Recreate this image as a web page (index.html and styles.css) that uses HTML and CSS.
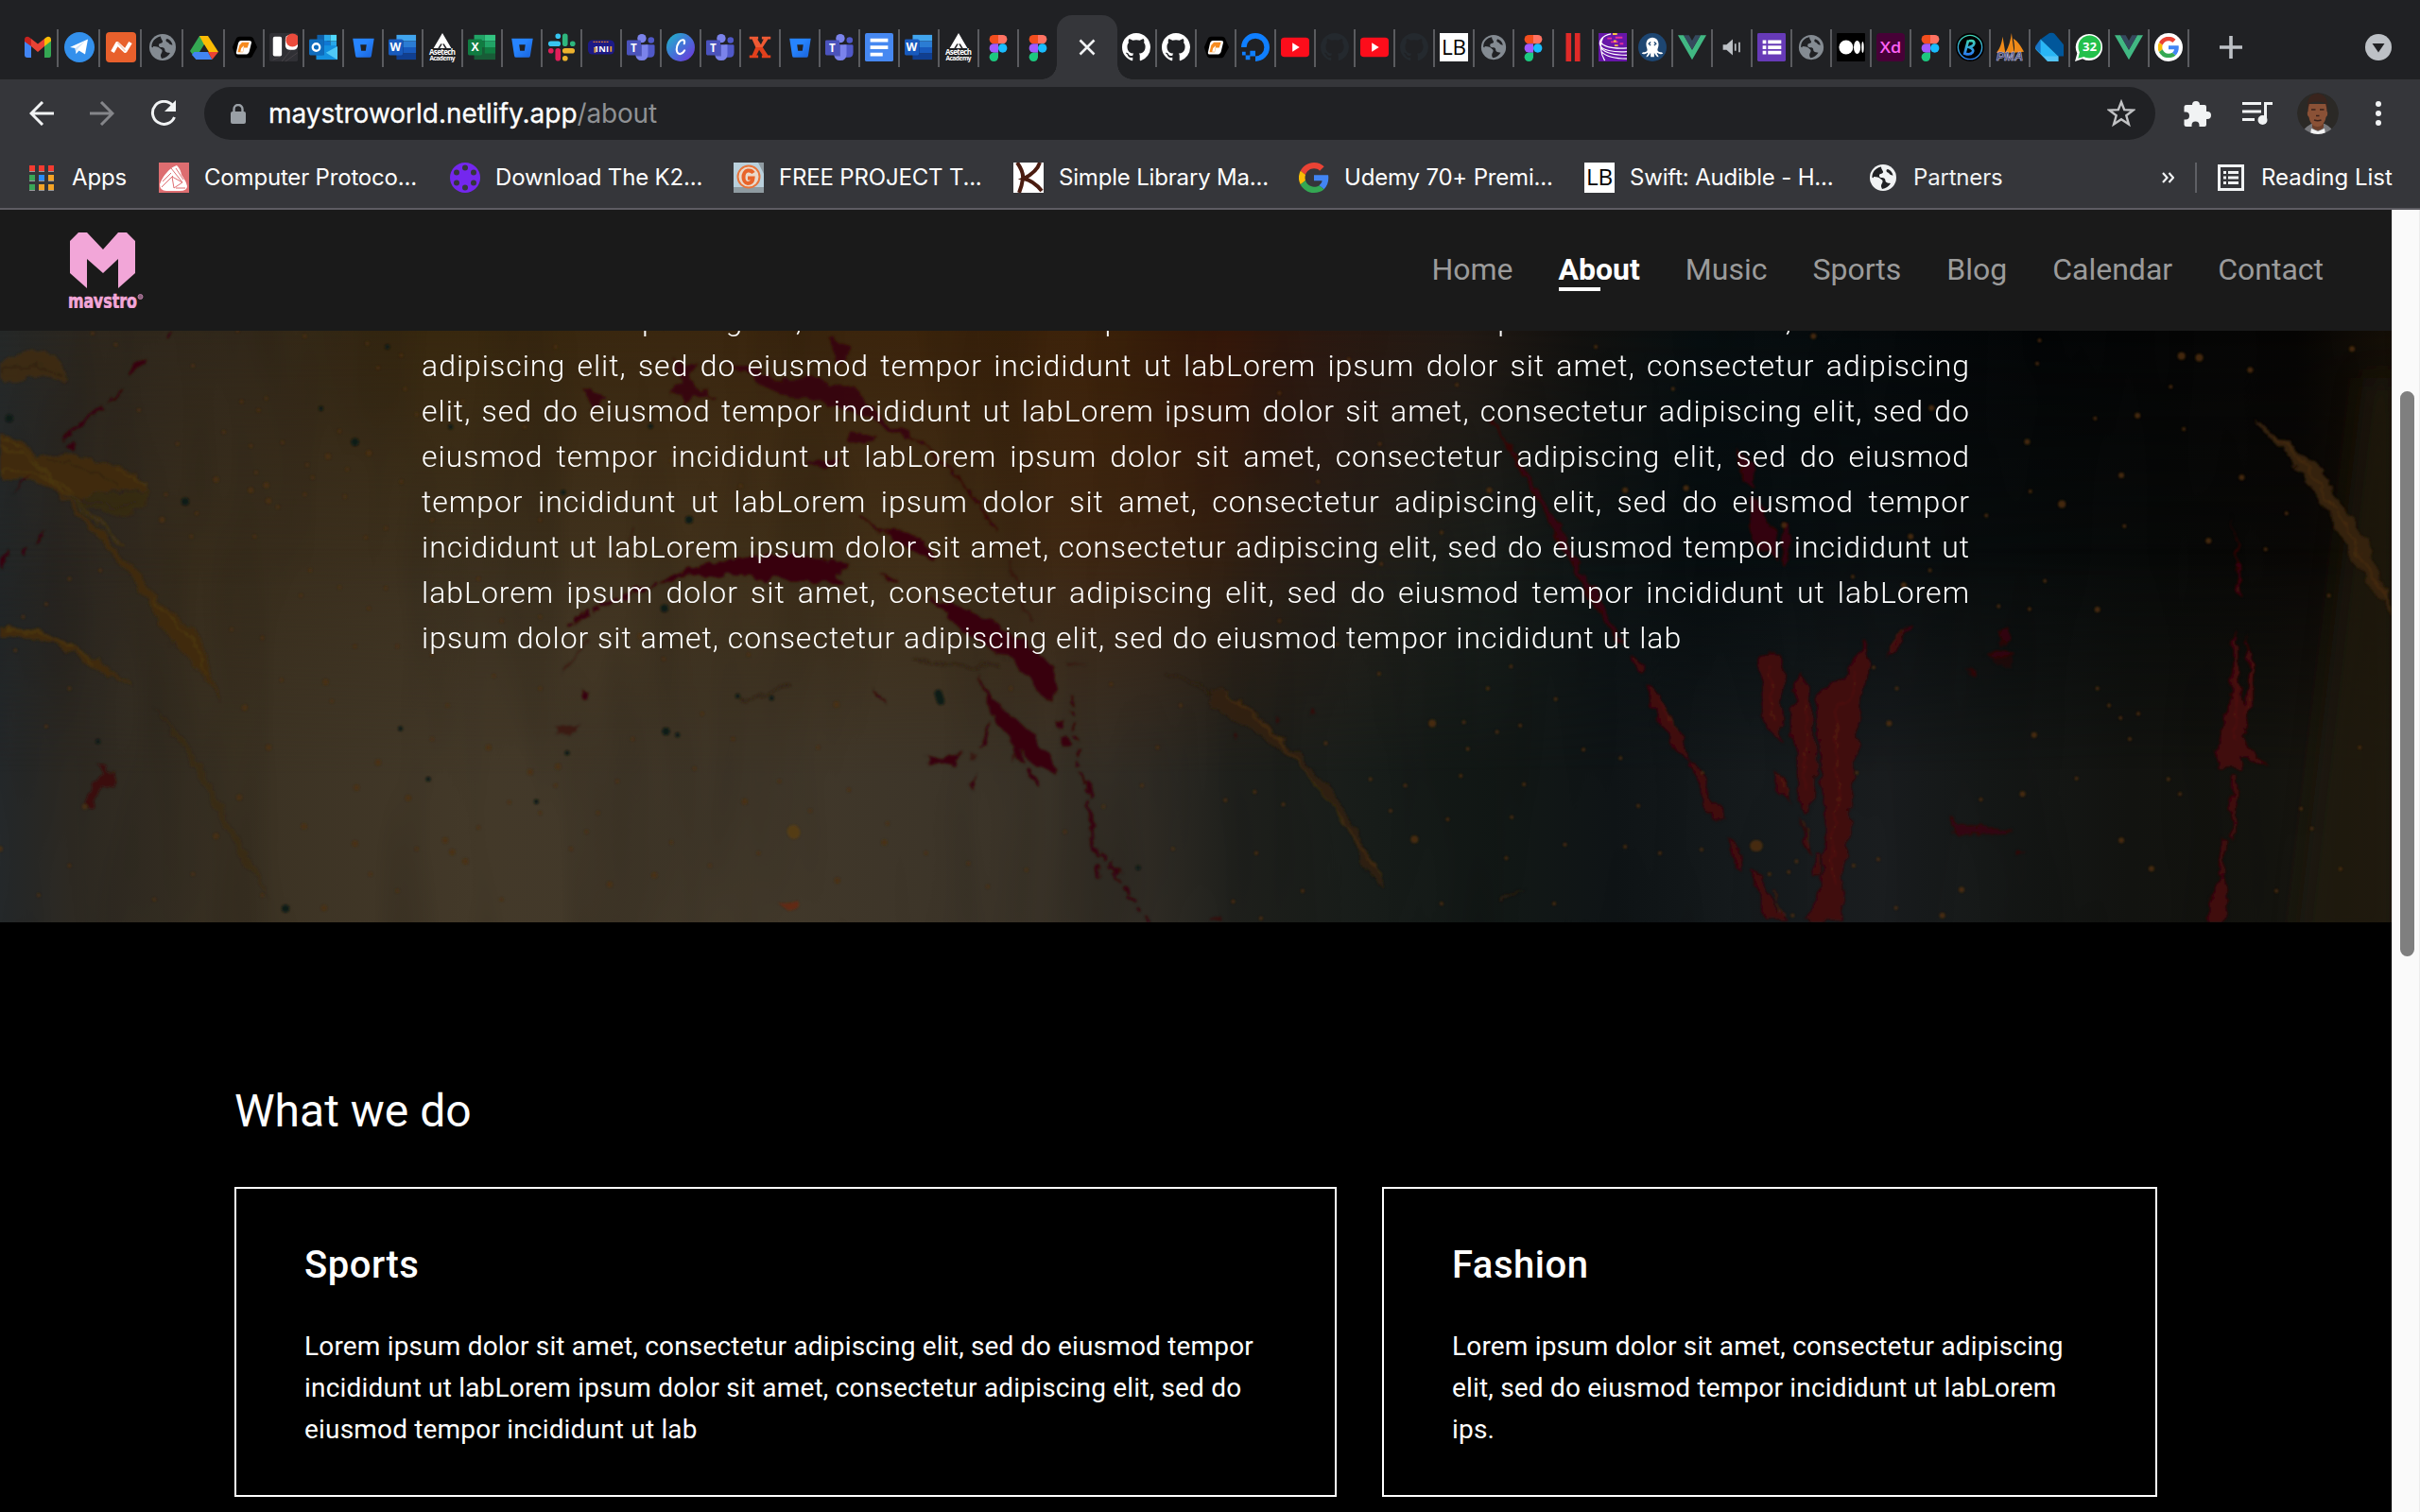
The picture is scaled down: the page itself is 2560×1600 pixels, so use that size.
FILE: index.html
```html
<!DOCTYPE html>
<html lang="en">
<head>
<meta charset="utf-8">
<title>About</title>
<link rel="stylesheet" href="styles.css">
</head>
<body>
<svg class="defs" aria-hidden="true">
  <defs>
    <linearGradient id="g-canva" x1="0" y1="0" x2="1" y2="1"><stop offset="0" stop-color="#1bb9c6"/><stop offset=".5" stop-color="#4472d8"/><stop offset="1" stop-color="#7430dc"/></linearGradient>
    <linearGradient id="g-b" x1="0" y1="0" x2="0" y2="1"><stop offset="0" stop-color="#41d4b4"/><stop offset="1" stop-color="#2b7ff0"/></linearGradient>
    <linearGradient id="g-bb" x1="0" y1="0" x2="1" y2="1"><stop offset=".4" stop-color="#2684ff"/><stop offset="1" stop-color="#1a62d8"/></linearGradient>
  </defs>
</svg>
<svg class="symbols" aria-hidden="true">
  <symbol id="gmail" viewBox="0 0 32 32"><path fill="#4285f4" d="M2 9v15q0 3 3 3h4V14z"/><path fill="#34a853" d="M23 27h5q2 0 2-3V9l-7 5z"/><path fill="#fbbc04" d="M23 7v8l7-5.500V8c0-3-3-4-5-2.500z"/><path fill="#ea4335" d="M9 15V7l7 5.500L23 7v8l-7 6z"/><path fill="#c5221f" d="M2 8v2l7 5V7L7 5.500C5 4 2 5 2 8z"/></symbol>
  <symbol id="telegram" viewBox="0 0 32 32"><circle cx="16" cy="16" r="16" fill="#3390ec"/><path fill="#fff" d="M6 16 25 7.500l-3 16-6.500-4-3 3.500-1-6z"/><path fill="#cfe3f8" d="m11.500 17 11-8-8.500 9-1.500 5z"/></symbol>
  <symbol id="netlify-n" viewBox="0 0 32 32"><rect width="32" height="32" rx="4" fill="#e8602c"/><path fill="none" stroke="#fff" stroke-width="4" stroke-linejoin="round" d="m7 21 5-9 8.500 8 5.500-9"/><path fill="none" stroke="#f5cdbb" stroke-width="1.500" d="m12.500 11 8 9"/></symbol>
  <symbol id="globe" viewBox="0 0 32 32"><circle cx="16" cy="16" r="14" fill="currentColor"/><path class="globe-cut" d="M14 4.500c-6 1-10 6-9.500 11.500 3 0 4 1 6.500 1.500 3 .5 5 .5 4.500 3-.5 2-1.500 2-1.500 5l1 2.500c4-.5 7-3 9-6-2-.5-3.500 0-5-1.500-1-1 0-3-2-4-2-.8-5 0-5-2.500 0-3 3-1.500 4-3.500.6-1.500-2-3-2-6z"/><path fill="currentColor" d="M6 15c4 0 7 1 8.500 3.500S12 23 12 26c-4-1-6.500-6-6-11z"/><path class="globe-cut" d="M21 7c-2 0-2 3 0 3.500 1.500.4 2 3 5.500 3-.8-3-2.500-5.500-5.500-6.500z"/></symbol>
  <symbol id="drive" viewBox="0 0 32 32"><path fill="#34a853" d="M11 4h5l3 5.500L7.500 29 1 20z"/><path fill="#fbbc04" d="M11 4h9l11 17H20z"/><path fill="#4285f4" d="M5.500 21H20l4.500 8H7.500L3 24z"/><path fill="#ea4335" d="M20 21h11l-6.500 8z"/><path fill="#202124" d="m16 13 5 8H11z"/></symbol>
  <symbol id="hex" viewBox="0 0 32 32"><path fill="#000" d="M11 4h12q3 0 4 3l4 9-5 9q-1 3-4 3H10q-3 0-4-3l-3-9 4-9q1-3 4-3z"/><path fill="#fff" d="M13 8.500h9q3 0 2.500 2.500L22 21q-1 3-4 3H9.500q-3 0-2-3l2-9q1-3.500 3.500-3.500z"/><path fill="#f68b1f" d="M14 10.500h8l-2 6h-4l-1 5H9l2-8z"/><path fill="#fff" d="m13 17 3-3-1 7h-3z"/></symbol>
  <symbol id="trello" viewBox="0 0 32 32"><rect width="32" height="32" rx="2" fill="#303035"/><path stroke="#484348" d="m14 32 16-20M18 32l14-10M4 30l8-3"/><rect x="4" y="4" width="10" height="22" rx="2" fill="#fff"/><rect x="18" y="2" width="14" height="17" rx="5" fill="#fff"/><circle cx="26" cy="8" r="7.500" fill="#ea4b3c"/></symbol>
  <symbol id="outlook" viewBox="0 0 32 32"><path fill="#0f5fa8" d="M9 2h11v13H9z"/><path fill="#28a8ea" d="M17 2h7v7h-7z"/><path fill="#50d9ff" d="M24 2h7v7h-7z"/><path fill="#0f78d4" d="M17 9h7v6h-7z"/><path fill="#28a8ea" d="M24 9h7v6h-7z"/><path fill="#1490df" d="M8 14h23v16H8z"/><path fill="#50c8f5" d="M32 15v15L19 22z"/><path fill="#1066b5" d="M8 8h9v17H8z"/><rect y="7" width="16" height="18" rx="1.500" fill="#0f6cbd"/><circle cx="8" cy="16" r="4" fill="none" stroke="#fff" stroke-width="2.500"/></symbol>
  <symbol id="bitbucket" viewBox="0 0 32 32"><path fill="url(#g-bb)" d="M4.500 6h24l-3 19.500q-.3 2-2 2H9.500q-1.700 0-2-2z"/><path fill="#202124" d="M13 13h7l-1 7h-5z"/></symbol>
  <symbol id="word" viewBox="0 0 32 32"><path fill="#41a5ee" d="M9 2h22v7H9z"/><path fill="#2b7cd3" d="M9 9h22v7H9z"/><path fill="#185abd" d="M9 16h22v7H9z"/><path fill="#103f91" d="M9 23h22v7H9z"/><path fill="#103f91" opacity=".6" d="M9 8h8v18H9z"/><rect y="7" width="16" height="18" rx="1.500" fill="#185abd"/><text x="8" y="20.500" class="fav-text" font-size="13">W</text></symbol>
  <symbol id="excel" viewBox="0 0 32 32"><path fill="#21a366" d="M7 2h12v7H7z"/><path fill="#33c481" d="M19 2h12v7H19z"/><path fill="#107c41" d="M7 9h12v7H7z"/><path fill="#21a366" d="M19 9h12v7H19z"/><path fill="#185c37" d="M7 16h24v14H7z"/><path fill="#107c41" d="M19 16h12v7H19z"/><rect y="7" width="16" height="18" rx="1.500" fill="#107c41"/><text x="8" y="20.500" class="fav-text" font-size="13">X</text></symbol>
  <symbol id="asetech" viewBox="0 0 32 32"><path fill="#fff" d="m16 0 10 17h-5l-5-8-5 8H6z"/><circle cx="16" cy="10" r="2.600" fill="#fff"/><path fill="#fff" d="m13 17 3-5 3 5z"/><text x="16" y="24.500" class="fav-text" font-size="8.500" textLength="30">Asetech</text><text x="16" y="31" class="fav-text" font-size="7" textLength="29">Academy</text></symbol>
  <symbol id="slack" viewBox="0 0 32 32"><g fill="none" stroke-width="6" stroke-linecap="round"><path stroke="#36c5f0" d="M4 12h8M12 3.500h.1"/><path stroke="#2eb67d" d="M20 3.500V12M28.500 12h.1"/><path stroke="#ecb22e" d="M20 20h8M20 28.500h.1"/><path stroke="#e01e5a" d="M12 20v8.500M4 20h.1"/></g></symbol>
  <symbol id="hundred" viewBox="0 0 32 32"><rect x="1" y="8" width="30" height="16" rx="5" fill="#1d1a86"/><path stroke="#d8792c" stroke-width="1.500" d="M7 10h18" stroke-dasharray="2 1"/><text x="16" y="21" class="fav-text" font-size="10">1NI</text><path stroke="#e2a13c" stroke-width="2" d="M9 16v6M27 15v6"/></symbol>
  <symbol id="teams" viewBox="0 0 32 32"><circle cx="17" cy="6" r="5" fill="#7b83eb"/><circle cx="27.500" cy="8" r="3.500" fill="#5059c9"/><path fill="#5059c9" d="M21 13h9q1.500 0 1.500 1.500V22q0 5-5 5.500H22z"/><path fill="#7b83eb" d="M10 13h14v11q0 7-7 7t-7-7z"/><path fill="#3b4099" opacity=".6" d="M10 13h7v13h-6z"/><rect y="8" width="16" height="17" rx="1.500" fill="#4b53bc"/><text x="8" y="21" class="fav-text" font-size="12.500">T</text></symbol>
  <symbol id="canva" viewBox="0 0 32 32"><circle cx="16" cy="16" r="16" fill="url(#g-canva)"/><path fill="none" stroke="#fff" stroke-width="2.200" stroke-linecap="round" d="M20 12c2-5-3-5.500-6-1.500-3.500 5-3.500 12 .5 13 2.500.5 4.500-1.500 6-4"/></symbol>
  <symbol id="redx" viewBox="0 0 32 32"><path fill="#ef5a34" d="M4 4h10v3h-1l4 6 3-6h-2V4h10v3h-3l-6 9h-8L7 7H4z"/><path fill="#e2401c" d="M11 16h8l6 9h3v3H18v-3h1l-4-6-3 6h2v3H4v-3h3z"/></symbol>
  <symbol id="docs" viewBox="0 0 32 32"><rect width="32" height="32" rx="2" fill="#4688f1"/><path fill="#fff" d="M6 6h20v4H6zM6 14h20v4H6zM6 22h14v4H6z"/></symbol>
  <symbol id="figma" viewBox="0 0 32 32"><path fill="#f24e1e" d="M16 2h-5a5 5 0 0 0 0 10h5z"/><path fill="#ff7262" d="M16 2h5a5 5 0 0 1 0 10h-5z"/><path fill="#a259ff" d="M16 12h-5a5 5 0 0 0 0 10h5z"/><circle cx="21" cy="17" r="5" fill="#1abcfe"/><path fill="#1cc87f" d="M16 22h-5a5 5 0 1 0 5 5z"/></symbol>
  <symbol id="github" viewBox="0 0 16 16"><path fill="currentColor" d="M8 0C3.580 0 0 3.580 0 8c0 3.540 2.290 6.530 5.470 7.590.4.070.55-.17.55-.38 0-.19-.01-.82-.01-1.490-2.010.37-2.530-.49-2.690-.94-.09-.23-.48-.94-.82-1.130-.28-.15-.68-.52-.01-.53.63-.01 1.080.58 1.230.82.72 1.210 1.870.87 2.330.66.07-.52.28-.87.51-1.070-1.780-.2-3.640-.89-3.640-3.950 0-.87.31-1.590.82-2.150-.08-.2-.36-1.020.08-2.120 0 0 .67-.21 2.200.82.64-.18 1.320-.27 2-.27s1.360.09 2 .27c1.530-1.040 2.200-.82 2.200-.82.44 1.100.16 1.920.08 2.120.51.56.82 1.270.82 2.150 0 3.070-1.870 3.750-3.650 3.950.29.25.54.73.54 1.480 0 1.070-.01 1.930-.01 2.200 0 .21.15.46.55.38A8.010 8.010 0 0 0 16 8c0-4.420-3.580-8-8-8z"/></symbol>
  <symbol id="docean" viewBox="0 0 32 32"><path fill="none" stroke="#0f7fff" stroke-width="6" d="M3 16a13 13 0 1 1 13 13"/><path fill="#0f7fff" d="M10 20h6v6h-6zM5 25h5v5H5zM1 21h4v4H1z"/></symbol>
  <symbol id="youtube" viewBox="0 0 32 32"><rect y="5" width="32" height="22" rx="4" fill="#fd0d1b"/><path fill="#fff" d="m13 11 8 5-8 5z"/></symbol>
  <symbol id="lb" viewBox="0 0 32 32"><path fill="#fff" d="M0 0h32v32H0z"/><text x="16" y="24" class="fav-dark" font-size="23" textLength="28" lengthAdjust="spacingAndGlyphs">LB</text></symbol>
  <symbol id="bars" viewBox="0 0 32 32"><path fill="#e02a28" d="M8 0h6v32H8zM18 0h6v32h-6z"/></symbol>
  <symbol id="waves" viewBox="0 0 32 32"><path fill="#6716a8" d="M0 0h32v32H0z"/><g fill="none" stroke="#fff" stroke-width="1.300"><path d="M14 1C4 3 0 9 2 14s14 8 30 7M3 17c5 6 16 8 29 8M3 21c6 6 17 8 29 8M5 5c-4 7-3 18 2 26M2 10c4 6 14 8 30 7"/></g><path stroke="#e5309c" stroke-width="2" d="M10 6h5M19 5h8M14 10h8M24 12h4"/><path stroke="#f6c445" stroke-width="2" d="M16 1h5M18 14h4M17 9h3"/></symbol>
  <symbol id="octopus" viewBox="0 0 32 32"><circle cx="16" cy="16" r="16" fill="#1d4672"/><path fill="#fff" d="M16 5c-5 0-7 4-7 8 0 3 2 5 1 7s-5 1-6 3c2 2 5 0 7-1 0 2-2 3-2 5 2 0 4-3 5-5v5h4v-5c1 2 3 5 5 5 0-2-2-3-2-5 2 1 5 3 7 1-1-2-5-1-6-3s1-4 1-7c0-4-2-8-7-8z"/><path fill="none" stroke="#1d4672" stroke-width="1.500" d="m14 10-2 2 2 2M18 10l2 2-2 2"/></symbol>
  <symbol id="vue" viewBox="0 0 32 32"><path fill="#41b883" d="M0 2.500h6.500L16 19l9.500-16.500H32L16 30z"/><path fill="#35495e" d="M6.500 2.500h6L16 8.500l3.500-6h6L16 19z"/></symbol>
  <symbol id="speaker" viewBox="0 0 32 32"><path fill="#bdc1c6" d="M6 13h4l7-6v18l-7-6H6z"/><path stroke="#bdc1c6" stroke-width="1.800" d="M20 12v8M24.500 10.500v11"/></symbol>
  <symbol id="forms" viewBox="0 0 32 32"><rect width="32" height="32" rx="1.500" fill="#673ab7"/><path fill="#fff" d="M6 8h4v4H6zM12 8h15v4H12zM6 14h4v4H6zM12 14h15v4H12zM6 20h4v4H6zM12 20h15v4H12z"/></symbol>
  <symbol id="medium" viewBox="0 0 32 32"><rect width="32" height="32" rx="1" fill="#000"/><circle cx="10.500" cy="16" r="8" fill="#fff"/><ellipse cx="23" cy="16" rx="3.800" ry="7.500" fill="#fff"/><ellipse cx="29.300" cy="16" rx="1.300" ry="6.500" fill="#fff"/></symbol>
  <symbol id="xd" viewBox="0 0 32 32"><rect width="32" height="32" rx="4" fill="#470137"/><text x="16" y="22" class="fav-text fav-pink" font-size="18" textLength="24" lengthAdjust="spacingAndGlyphs">Xd</text></symbol>
  <symbol id="b-logo" viewBox="0 0 32 32"><circle cx="16" cy="16" r="16" fill="#000"/><circle cx="16" cy="16" r="13.500" fill="none" stroke="url(#g-b)" stroke-width="1.500"/><path fill="none" stroke="url(#g-b)" stroke-width="3" d="m14 8-4 15c8 3 14-4 5-7 8-2 7-9 0-7"/></symbol>
  <symbol id="pma" viewBox="0 0 32 32"><path fill="#f08a18" d="M1 22C5 18 7 11 8 4l3 18zM11 22c4-6 6-14 7-22l3 22zM21 22c1-5 0-11-1-16 5 3 9 9 12 15z"/><text x="16" y="31" class="fav-pma" font-size="13" textLength="30" lengthAdjust="spacingAndGlyphs">PMA</text></symbol>
  <symbol id="dart" viewBox="0 0 32 32"><path fill="#01579b" d="M6 7 16 0q4-1 6 1l10 12v13h-6z"/><path fill="#29b6f6" d="m6 7 20 19v6H14L1 19q-2-2 0-5z"/><path fill="#0d47a1" opacity=".6" d="M6 7v16l-5-5q-2-2 0-5z"/><path fill="#54c5f8" d="m6 23 4 3h16v6H14z"/></symbol>
  <symbol id="whatsapp" viewBox="0 0 32 32"><path fill="#fff" d="M16 1a15 15 0 0 1 0 30q-4 0-7.500-2L0 32l2.500-9A15 15 0 0 1 16 1z"/><circle cx="16.500" cy="15.500" r="12.800" fill="#23c04b"/><path fill="#23c04b" d="m3.500 28.500 2-8 6 6z"/><text x="16.500" y="20.500" class="fav-text" font-size="14">32</text></symbol>
  <symbol id="google-g" viewBox="0 0 48 48"><path fill="#ea4335" d="M24 9.500c3.540 0 6.710 1.220 9.210 3.600l6.850-6.850C35.900 2.380 30.470 0 24 0 14.620 0 6.510 5.380 2.560 13.220l7.980 6.190C12.430 13.720 17.740 9.500 24 9.500z"/><path fill="#4285f4" d="M46.980 24.550c0-1.570-.15-3.090-.38-4.550H24v9.020h12.940c-.58 2.960-2.260 5.480-4.780 7.180l7.730 6c4.510-4.180 7.090-10.360 7.090-17.650z"/><path fill="#fbbc05" d="M10.530 28.590a14.500 14.500 0 0 1 0-9.180l-7.980-6.190a24 24 0 0 0 0 21.560z"/><path fill="#34a853" d="M24 48c6.480 0 11.930-2.130 15.890-5.810l-7.730-6c-2.150 1.450-4.920 2.300-8.160 2.300-6.260 0-11.570-4.220-13.470-9.910l-7.980 6.190C6.510 42.620 14.620 48 24 48z"/></symbol>
</svg>

<header class="browser">
  <div class="tabs">
    <span class="tab wide"><svg><use href="#gmail"/></svg></span>
    <span class="tab wide"><svg><use href="#telegram"/></svg></span>
    <span class="tab wide"><svg><use href="#netlify-n"/></svg></span>
    <span class="tab wide grey"><svg><use href="#globe"/></svg></span>
    <span class="tab wide"><svg><use href="#drive"/></svg></span>
    <span class="tab"><svg><use href="#hex"/></svg></span>
    <span class="tab"><svg><use href="#trello"/></svg></span>
    <span class="tab"><svg><use href="#outlook"/></svg></span>
    <span class="tab"><svg><use href="#bitbucket"/></svg></span>
    <span class="tab"><svg><use href="#word"/></svg></span>
    <span class="tab"><svg><use href="#asetech"/></svg></span>
    <span class="tab"><svg><use href="#excel"/></svg></span>
    <span class="tab"><svg><use href="#bitbucket"/></svg></span>
    <span class="tab"><svg><use href="#slack"/></svg></span>
    <span class="tab"><svg><use href="#hundred"/></svg></span>
    <span class="tab"><svg><use href="#teams"/></svg></span>
    <span class="tab"><svg><use href="#canva"/></svg></span>
    <span class="tab"><svg><use href="#teams"/></svg></span>
    <span class="tab"><svg><use href="#redx"/></svg></span>
    <span class="tab"><svg><use href="#bitbucket"/></svg></span>
    <span class="tab"><svg><use href="#teams"/></svg></span>
    <span class="tab"><svg><use href="#docs"/></svg></span>
    <span class="tab"><svg><use href="#word"/></svg></span>
    <span class="tab"><svg><use href="#asetech"/></svg></span>
    <span class="tab"><svg><use href="#figma"/></svg></span>
    <span class="tab last"><svg><use href="#figma"/></svg></span>
    <span class="tab-active"><svg viewBox="0 0 18 18"><path d="m1.500 1.500 15 15m0-15-15 15"/></svg></span>
    <span class="tab white"><svg><use href="#github"/></svg></span>
    <span class="tab white"><svg><use href="#github"/></svg></span>
    <span class="tab"><svg><use href="#hex"/></svg></span>
    <span class="tab"><svg><use href="#docean"/></svg></span>
    <span class="tab"><svg><use href="#youtube"/></svg></span>
    <span class="tab dim"><svg><use href="#github"/></svg></span>
    <span class="tab"><svg><use href="#youtube"/></svg></span>
    <span class="tab dim"><svg><use href="#github"/></svg></span>
    <span class="tab"><svg><use href="#lb"/></svg></span>
    <span class="tab grey"><svg><use href="#globe"/></svg></span>
    <span class="tab"><svg><use href="#figma"/></svg></span>
    <span class="tab"><svg><use href="#bars"/></svg></span>
    <span class="tab"><svg><use href="#waves"/></svg></span>
    <span class="tab"><svg><use href="#octopus"/></svg></span>
    <span class="tab"><svg><use href="#vue"/></svg></span>
    <span class="tab"><svg><use href="#speaker"/></svg></span>
    <span class="tab"><svg><use href="#forms"/></svg></span>
    <span class="tab grey"><svg><use href="#globe"/></svg></span>
    <span class="tab"><svg><use href="#medium"/></svg></span>
    <span class="tab"><svg><use href="#xd"/></svg></span>
    <span class="tab"><svg><use href="#figma"/></svg></span>
    <span class="tab"><svg><use href="#b-logo"/></svg></span>
    <span class="tab"><svg><use href="#pma"/></svg></span>
    <span class="tab"><svg><use href="#dart"/></svg></span>
    <span class="tab"><svg><use href="#whatsapp"/></svg></span>
    <span class="tab"><svg><use href="#vue"/></svg></span>
    <span class="tab"><svg viewBox="0 0 32 32"><circle cx="16" cy="16" r="16" fill="#fff"/><use href="#google-g" x="4" y="4" width="24" height="24"/></svg></span>
    <svg class="new-tab" viewBox="0 0 24 24"><path d="M12 0v24M0 12h24"/></svg>
    <svg class="tab-search" viewBox="0 0 28 28"><circle cx="14" cy="14" r="14"/><path d="M7.500 10h13L14 19.500z"/></svg>
  </div>

  <div class="toolbar">
    <div class="controls">
      <svg viewBox="0 0 26 26"><path d="M26 13H2M14 1 2 13l12 12"/></svg>
      <svg class="disabled" viewBox="0 0 26 26"><path d="M0 13h24M12 1l12 12-12 12"/></svg>
      <svg class="reload" viewBox="0 0 28 28"><path d="M23.500 5.500A12 12 0 1 0 25.500 18"/><path class="solid" d="M27 0v12H15z"/></svg>
    </div>
    <div class="omnibox">
      <svg class="lock" viewBox="0 0 16 21"><rect y="8" width="16" height="13" rx="2"/><path d="M3.500 9V5.500a4.500 4.500 0 0 1 9 0V9"/></svg>
      <span class="url">maystroworld.netlify.app<span>/about</span></span>
      <svg class="star" viewBox="0 0 30 30"><path d="m15 3 3.200 8.200 9.300.4-7.200 5.700 2.600 9.200L15 21.300l-7.900 5.200 2.600-9.200-7.200-5.700 9.300-.4z"/></svg>
    </div>
    <div class="actions">
      <svg class="puzzle" viewBox="0 0 29 28"><path d="M9 5a4 4 0 0 1 8 0h5q2 0 2 2v5h1a4 4 0 0 1 0 8h-1v6q0 2-2 2h-5.500v-1.500a4 4 0 0 0-8 0V28H3q-2.500 0-2.500-2v-5.500H2a4 4 0 0 0 0-8H.5V7Q.5 5 3 5z"/></svg>
      <svg class="queue" viewBox="0 0 32 24"><path d="M0 1.500h20M0 10h20M0 18.500h13"/><path d="M24.500 19V1.500H32"/><circle cx="21.500" cy="19" r="5"/></svg>
      <svg class="avatar" viewBox="0 0 44 44"><circle cx="22" cy="22" r="22" fill="#2b2926"/><path fill="#77787c" d="M5 44q1-6 10-11h14q9 4 9 11z"/><path fill="#f2f2f2" d="m15 38 7 3 7-3 1 6H14z"/><path fill="#6d3f2a" d="M16 28h12v9q-6 6-12 0z"/><path fill="#8a5136" d="M12 12h19l.5 8q1 0 .5 4l-1.500 2q-1 6-5 9-4 2-8 0-4-3-5-9l-1.500-2q-.5-4 .5-4z"/><path fill="#3a241d" d="M11.500 18Q9 2 21.500 1 34 2 31.500 18L30 11q-8-3-17 0z"/><path stroke="#38201a" stroke-width="1.500" fill="none" d="M15 18h4.500M24 18h4.500M18 29q4 1.500 7.500 0M20 24.500h3.500"/></svg>
      <svg class="kebab" viewBox="0 0 6 26"><circle cx="3" cy="3" r="3"/><circle cx="3" cy="13" r="3"/><circle cx="3" cy="23" r="3"/></svg>
    </div>
  </div>

  <div class="bookmarks">
    <a class="bm apps"><svg viewBox="0 0 26 27"><path fill="#98989c" d="M0 3h6v4H0zM10 3h6v4h-6zM20 3h6v4h-6zM0 13h6v4H0zM10 13h6v4h-6zM20 13h6v4h-6zM0 23h6v4H0zM10 23h6v4h-6zM20 23h6v4h-6z"/><path fill="#f43b30" d="M0 0h6v6H0zM10 0h6v6h-6zM20 0h6v6h-6z"/><path fill="#3aa757" d="M0 10h6v6H0zM0 20h6v6H0z"/><path fill="#2a8cf7" d="M10 10h6v6h-6z"/><path fill="#f5a425" d="M20 10h6v6h-6zM10 20h6v6h-6zM20 20h6v6h-6z"/></svg>Apps</a>
    <a class="bm"><svg viewBox="0 0 32 32"><path fill="#dd6d70" d="M0 0h32v32H0z"/><path fill="#fff" d="M19 3q4 4 5 10 5 7 6 12 0 5-8 5H8q-7 0-7-7 3-8 8-13 4-5 10-7z"/><path stroke="#dd6d70" fill="none" d="m4 20 9-9M3 26l12-12M14 15l11 6-9 6zM18 6l8 12M13 6l12 15M18 27h10"/></svg>Computer Protoco...</a>
    <a class="bm"><svg viewBox="0 0 32 32"><circle cx="16" cy="16" r="16" fill="#7427ee"/><g fill="#35363a"><circle cx="16" cy="5.500" r="3"/><circle cx="16" cy="26.500" r="3"/><circle cx="7" cy="10.500" r="3"/><circle cx="25" cy="10.500" r="3"/><circle cx="7" cy="21.500" r="3"/><circle cx="25" cy="21.500" r="3"/></g></svg>Download The K2...</a>
    <a class="bm"><svg viewBox="0 0 32 32"><path fill="#b9d0dc" d="M0 0h32v32H0z"/><path fill="#8f9ba1" d="M0 26h32v6H0zM26 0h6v12z"/><circle cx="16" cy="15" r="11.500" fill="#ead9cb" stroke="#e8743a" stroke-width="2"/><path fill="none" stroke="#e8642a" stroke-width="4" d="M21 11q-2-3-6-2.500c-6 1-6 13 0 13.500q5 0 5.500-5.500H15"/></svg>FREE PROJECT T...</a>
    <a class="bm"><svg viewBox="0 0 32 32"><path fill="#fff" d="M0 0h32v32H0z"/><path fill="none" stroke="#4a1c10" stroke-width="4" d="M4 0q7 10 6 17-1 8-4 15M28 0q-3 10-17 17 10 2 19 13"/></svg>Simple Library Ma...</a>
    <a class="bm"><svg><use href="#google-g"/></svg>Udemy 70+ Premi...</a>
    <a class="bm"><svg><use href="#lb"/></svg>Swift: Audible - H...</a>
    <a class="bm globe-bm"><svg viewBox="2 2 28 28"><use href="#globe" width="32" height="32"/></svg>Partners</a>
    <span class="more"><svg viewBox="0 0 13 12"><path d="m1 1 4.500 5L1 11M7.500 1l4.500 5-4.500 5"/></svg></span>
    <a class="reading"><svg viewBox="0 0 28 28"><path fill="none" stroke="#f1f3f4" stroke-width="3" d="M1.500 1.500h25v25h-25z"/><path fill="#f1f3f4" d="M6 7h3v3H6zM11 7h11v3H11zM6 12.500h3v3H6zM11 12.500h11v3H11zM6 18h3v3H6zM11 18h11v3H11z"/></svg>Reading List</a>
  </div>
</header>

<div class="viewport">
  <main class="page">
    <nav class="navbar">
      <svg class="logo" viewBox="0 0 80 80">
        <path fill="#f2a6d8" d="M2 9 11 0h9l17 18L53 0h9l9 9v34L53 59V28L37 43 20 28v31L2 43z"/>
        <text class="logo-word" x="0" y="80" textLength="73" lengthAdjust="spacingAndGlyphs">maystro</text>
        <circle cx="76.500" cy="68" r="2.500" fill="#8a5f7c" stroke="#b67ba3"/>
      </svg>
      <div class="links">
        <a>Home</a><a class="active">About</a><a>Music</a><a>Sports</a><a>Blog</a><a>Calendar</a><a>Contact</a>
      </div>
    </nav>

    <section class="hero">
      <svg class="painting" viewBox="0 350 2530 626" preserveAspectRatio="none">
        <defs>
          <linearGradient id="row-top"><stop offset="0" stop-color="#252828"/><stop offset=".04" stop-color="#2e271d"/><stop offset=".1" stop-color="#33291b"/><stop offset=".18" stop-color="#38280f"/><stop offset=".28" stop-color="#3a2710"/><stop offset=".4" stop-color="#3c240c"/><stop offset=".47" stop-color="#3d220a"/><stop offset=".51" stop-color="#36180a"/><stop offset=".55" stop-color="#2b1810"/><stop offset=".61" stop-color="#231a14"/><stop offset=".66" stop-color="#12110f"/><stop offset=".71" stop-color="#080f11"/><stop offset=".79" stop-color="#060a0c"/><stop offset=".85" stop-color="#040607"/><stop offset=".96" stop-color="#070605"/><stop offset="1" stop-color="#150f07"/></linearGradient>
          <linearGradient id="row-mid"><stop offset="0" stop-color="#25292a"/><stop offset=".025" stop-color="#2c2823"/><stop offset=".08" stop-color="#382d1c"/><stop offset=".2" stop-color="#3e3220"/><stop offset=".31" stop-color="#43331c"/><stop offset=".4" stop-color="#402e17"/><stop offset=".455" stop-color="#3e2713"/><stop offset=".505" stop-color="#352212"/><stop offset=".55" stop-color="#2a2119"/><stop offset=".61" stop-color="#1b1f1b"/><stop offset=".67" stop-color="#0d1415"/><stop offset=".71" stop-color="#070d0f"/><stop offset=".77" stop-color="#0a1012"/><stop offset=".9" stop-color="#080a09"/><stop offset=".965" stop-color="#0b0907"/><stop offset="1" stop-color="#171008"/></linearGradient>
          <linearGradient id="row-low"><stop offset="0" stop-color="#25292b"/><stop offset=".03" stop-color="#2d2922"/><stop offset=".1" stop-color="#3b3223"/><stop offset=".2" stop-color="#433929"/><stop offset=".32" stop-color="#41382a"/><stop offset=".435" stop-color="#3a3328"/><stop offset=".48" stop-color="#302c25"/><stop offset=".515" stop-color="#20211d"/><stop offset=".575" stop-color="#171c19"/><stop offset=".63" stop-color="#121816"/><stop offset=".675" stop-color="#0f1416"/><stop offset=".73" stop-color="#151a1c"/><stop offset=".79" stop-color="#1a1d1f"/><stop offset=".83" stop-color="#161918"/><stop offset=".89" stop-color="#121310"/><stop offset=".95" stop-color="#14140f"/><stop offset="1" stop-color="#1f1811"/></linearGradient>
          <linearGradient id="fade" x2="0" y2="1"><stop offset="0" stop-color="#000"/><stop offset="1" stop-color="#fff"/></linearGradient>
          <mask id="m-mid" maskUnits="userSpaceOnUse" x="0" y="350" width="2530" height="626"><rect y="350" width="2530" height="270" fill="url(#fade)"/><rect y="620" width="2530" height="356" fill="#fff"/></mask>
          <mask id="m-low" maskUnits="userSpaceOnUse" x="0" y="350" width="2530" height="626"><rect y="580" width="2530" height="240" fill="url(#fade)"/><rect y="820" width="2530" height="156" fill="#fff"/></mask>
          <filter id="soft" x="-60%" y="-40%" width="220%" height="180%"><feGaussianBlur stdDeviation="14"/></filter>
          <filter id="edge" filterUnits="userSpaceOnUse" x="0" y="350" width="2530" height="626"><feTurbulence type="fractalNoise" baseFrequency=".06" numOctaves="3" seed="2"/><feDisplacementMap in="SourceGraphic" scale="14" xChannelSelector="R" yChannelSelector="G"/><feGaussianBlur stdDeviation=".8"/></filter>
          <filter id="dot-soft" filterUnits="userSpaceOnUse" x="0" y="350" width="2530" height="626"><feGaussianBlur stdDeviation=".8"/></filter>
          <filter id="shade" x="0" y="0" width="100%" height="100%"><feTurbulence type="fractalNoise" baseFrequency=".01 .002" numOctaves="3" seed="9"/><feColorMatrix values="0 0 0 0 0  0 0 0 0 0  0 0 0 0 0  2 0 0 0 -.85"/></filter>
        </defs>
        <rect y="350" width="2530" height="626" fill="url(#row-top)"/>
        <rect y="350" width="2530" height="626" fill="url(#row-mid)" mask="url(#m-mid)"/>
        <rect y="350" width="2530" height="626" fill="url(#row-low)" mask="url(#m-low)"/>
        <rect y="350" width="2530" height="626" filter="url(#shade)" opacity=".16"/>
        <path filter="url(#soft)" fill="#241a10" opacity=".6" d="M2500 400h40v600h-110z"/>

        <!-- paint strokes on the left half of the canvas -->
        <g filter="url(#edge)"><g transform="translate(0 300) scale(.8163 .4464)">
          <g fill="#412c0f">
            <path opacity=".8" d="M0 190Q40 140 68 170 88 200 85 242 62 212 40 218 25 245 0 225z"/>
            <path d="M0 355Q30 375 50 408 100 398 150 435 185 455 194 492 150 480 120 500 105 520 80 500 50 458 0 468z"/>
            <path opacity=".4" d="M80 500 194 492Q190 540 160 552 110 530 80 500z"/>
            <path d="M75 490Q150 610 200 740 245 800 268 880L284 990Q262 910 240 880 205 830 195 760 150 640 75 500z"/>
            <path d="M0 812Q60 815 112 880 150 920 174 962 130 920 90 872 50 835 0 835z"/>
            <path opacity=".35" d="M196 1000Q260 1110 290 1250 320 1350 350 1460 310 1360 282 1260 255 1130 196 1000z"/>
          </g>
          <g fill="none" stroke="#513c0f" stroke-width="2" opacity=".6">
            <path vector-effect="non-scaling-stroke" d="M0 365Q45 400 75 480M0 450Q60 430 80 490L150 600M0 385Q60 420 160 620M150 440L192 480M200 750Q250 830 270 930M10 818Q80 830 120 900"/>
            <path vector-effect="non-scaling-stroke" stroke="#2f210f" d="M60 420Q120 430 150 480M5 210Q40 170 80 220M90 500Q140 540 180 520"/>
          </g>
          <g fill="#37040a">
            <path d="M213 128 224 110 218 128zM164 215Q172 180 194 178 191 200 164 215zM138 278 152 250 160 248 145 272zM80 375 128 290 132 296 88 370zM84 392 97 375 92 398zM14 505 44 448 30 480zM40 615 62 585 50 608zM27 632 36 625 30 645zM0 660 14 632 6 672 0 680z"/>
            <path d="M124 1140Q145 1145 150 1192 138 1190 128 1205 120 1250 112 1235 108 1200 128 1178 142 1165 124 1140z" fill="#3a100e"/>
            <path d="M1075 130 1102 148 1096 190 1080 178zM940 188Q985 200 1000 225L1060 222Q1070 250 1085 235 1112 255 1130 290 1150 340 1190 375 1155 360 1135 325 1090 295 1060 282 1010 270 990 238 965 215 940 188zM872 182 902 192 892 225 925 272 900 262 885 288 885 260 866 266 884 235zM757 245 788 275 768 295zM1100 353 1138 360 1120 384 1095 374zM1045 420 1090 415 1075 440z" opacity=".85"/>
            <path d="M1145 585 1192 600Q1205 630 1212 652 1180 635 1165 615zM860 700Q920 655 970 643 1040 638 1100 665L1085 688 1097 714Q1060 712 1030 700 980 707 960 690 920 687 860 700zM1138 690 1168 710 1150 706zM1202 740Q1250 765 1280 800 1330 850 1350 880 1374 920 1366 990 1340 975 1328 920 1290 870 1265 840 1235 820 1230 780z"/>
            <path d="M1268 918Q1278 980 1300 1010 1345 1070 1373 1168 1320 1122 1300 1060 1275 1000 1268 918zM1369 1035h8v20h-8zM1375 1068h10v22h-10zM1202 1118 1215 1128 1245 1114 1238 1142 1220 1135 1205 1150zM1284 1030 1278 1090 1270 1100zM1268 1158 1260 1200 1254 1205zM1133 952 1146 1000 1138 985zM754 962 766 975 758 982z"/>
            <path opacity=".5" d="M715 1060 752 1042 750 1062 720 1075zM1378 900 1412 902 1380 906zM1255 1110 1268 1120 1256 1135zM1312 1115 1322 1110 1316 1142z"/>
          </g>
          <g fill="none" stroke="#37040a" stroke-width="2" stroke-linecap="round">
            <path vector-effect="non-scaling-stroke" d="M1190 375Q1250 460 1290 585M1115 550L1150 600"/>
            <path vector-effect="non-scaling-stroke" stroke-width="4" stroke-dasharray="14 6 5 8" d="M875 697Q800 745 735 805"/>
            <path vector-effect="non-scaling-stroke" stroke-width="3" stroke-dasharray="7 9 2 10" d="M1388 980Q1402 1180 1420 1330 1450 1420 1486 1510"/>
            <path vector-effect="non-scaling-stroke" stroke-width="4" stroke-dasharray="16 14" d="M1410 1180Q1415 1300 1425 1400M1440 1370 1464 1440M1315 1100 1345 1190"/>
            <path vector-effect="non-scaling-stroke" opacity=".5" d="M820 580 818 620M1310 660 1335 800M760 850 730 920"/>
          </g>
          <g fill="none" stroke="#30200f" stroke-width="3" opacity=".6"><path vector-effect="non-scaling-stroke" d="M1185 890Q1230 915 1290 905M960 990 1025 955M1510 925Q1550 940 1568 975"/></g>
        </g></g>
        <g filter="url(#dot-soft)"><g transform="translate(0 300) scale(.8163 .4464)">
          <g class="dots" stroke="#0b1a13" stroke-width="8">
            <path vector-effect="non-scaling-stroke" d="M460 376h0M240 517h0M12 320h0M893 560h0M861 770h0M863 1062h0M1216 972l3 18M370 1482h0"/>
            <path vector-effect="non-scaling-stroke" stroke-width="5" d="M735 1113h0M127 1086h0M695 1228h0M843 338h0M956 978h0M1475 1385h0M584 340h0M730 495h0M502 150h0M416 296h0M555 1175h0M519 1055h0M1000 983h0M878 1070h0"/>
          </g>
          <g class="dots" stroke="#4d300d" stroke-width="4" opacity=".8">
            <path vector-effect="non-scaling-stroke" d="M120 118h0M308 112h0M395 125h0M476 142h0M150 145h0M520 170h0M313 280h0M345 272h0M290 352h0M335 300h0M180 300h0M250 195h0M525 250h0M540 310h0M490 200h0M366 377h0M325 385h0M440 350h0M398 430h0M450 440h0M230 380h0M332 448h0M215 500h0M405 460h0M360 530h0M255 545h0M520 470h0M395 500h0M447 505h0M500 580h0M474 602h0M560 560h0M248 600h0M330 600h0M600 520h0M620 700h0M440 720h0M500 722h0M478 770h0M390 740h0M560 760h0M650 800h0M700 790h0M402 680h0M340 840h0M460 860h0M300 820h0M515 860h0M560 880h0M610 830h0M90 700h0M60 760h0M130 680h0M30 790h0M20 870h0M90 960h0M60 1050h0"/>
            <path vector-effect="non-scaling-stroke" stroke-width="6" d="M425 410h0M478 402h0M280 465h0M345 478h0M348 515h0M210 560h0M325 490h0M422 945h0M317 1005h0M348 1100h0M462 1195h0M310 1218h0M490 1135h0M529 1220h0M394 1287h0M460 1328h0M577 1320h0M586 1348h0M603 1370h0M633 1100h0M687 1158h0M723 1145h0M848 1403h0M965 1228h0M1085 1415h0M1146 1325h0M1084 998h0M790 1425h0M420 1480h0M110 1240h0M0 1340h0M280 1310h0M830 836h0"/>
            <path vector-effect="non-scaling-stroke" d="M700 1255h0M760 1300h0M870 1325h0M920 1380h0M740 1340h0M1010 1180h0M1050 1250h0M1100 1200h0M1150 1280h0M1060 1100h0M900 1150h0M950 1080h0M660 1230h0M620 1290h0M540 1340h0M480 1400h0M340 1450h0M250 1400h0M200 1460h0M90 1380h0M50 1450h0M1280 1430h0M1330 1390h0M1380 1300h0M1430 1240h0M1480 1190h0M1520 1340h0M1500 1100h0M1530 1000h0M1440 950h0M1310 960h0M860 890h0M970 880h0M1060 850h0M700 560h0M640 610h0M680 340h0M600 280h0M660 200h0M720 150h0M800 300h0M870 420h0M960 480h0M1020 540h0M983 1350h0M1200 1350h0M1255 1375h0M800 1180h0M775 1255h0M720 1190h0M515 1440h0M650 1460h0M430 990h0M365 940h0M560 1080h0M580 1000h0M820 1080h0M910 1020h0M700 960h0M640 930h0"/>
            <path vector-effect="non-scaling-stroke" stroke="#5c3e10" stroke-width="13" d="M1028 1298l1 4"/>
            <path stroke="none" fill="#6a260a" d="M1008 1468Q1020 1472 1034 1464 1040 1482 1022 1487z"/>
          </g>
        </g></g>

        <!-- paint strokes on the right half of the canvas -->
        <g filter="url(#edge)"><g transform="translate(1280 300) scale(.8163 .4464)">
          <g fill="#35210b">
            <path d="M1352 325Q1430 400 1470 530 1512 640 1531 800 1500 700 1468 610 1430 460 1352 325z"/>
            <path d="M0 955Q50 985 90 1080 170 1180 226 1435 198 1410 190 1330 150 1190 90 1100 40 1040 0 1005z" opacity=".8"/>
            <path d="M405 1425 382 1468 378 1460z" opacity=".7"/>
          </g>
          <path vector-effect="non-scaling-stroke" fill="none" stroke="#5a3b0d" stroke-width="2" opacity=".5" d="M1380 360Q1450 470 1530 780M20 970Q100 1070 220 1400"/>
          <g fill="#3f0709">
            <path d="M365 310Q385 380 412 450 450 560 482 680 505 760 540 858L530 850Q495 770 470 670 440 560 405 450 382 380 362 318z" opacity=".8"/>
            <path d="M542 885Q560 890 565 932 550 925 542 885zM562 948Q580 950 586 1000 600 1050 612 1070L622 1132Q605 1120 590 1060 570 1000 562 948zM620 1132Q635 1135 645 1190 660 1250 668 1272L650 1270Q635 1200 620 1132zM670 1315 680 1325 692 1398 682 1385zM703 1392Q715 1400 722 1445L746 1513H718Q712 1440 703 1392z"/>
            <path opacity=".8" d="M684 390 698 420 704 478 695 470zM702 500Q715 505 722 570L732 590 734 655Q705 630 700 570zM742 570h9v20l-4 80h-5z"/>
            <path d="M848 848 854 920Q838 1000 840 1080 832 1250 826 1350 814 1420 824 1440L816 1513H770L790 1440Q800 1350 795 1250 785 1100 790 980 800 930 822 938z"/>
            <path d="M765 915Q780 980 784 1080 790 1200 772 1262 758 1200 764 1120 745 1050 755 990zM712 885Q747 868 748 930 735 1000 742 1092 708 1030 714 980zM730 1155Q740 1160 752 1232 735 1220 730 1155zM766 1265 779 1355 770 1340zM784 1350h8v50h-8zM907 808 900 850 876 885 885 850z"/>
            <path opacity=".75" d="M1020 825 1032 815 1036 850 1024 860zM1005 885 1020 870 1042 875 1030 890zM980 920 992 922 990 935zM958 1262 985 1288 1040 1295 1030 1306 990 1304 965 1312zM1045 1345 1055 1350 1048 1355zM82 1018 92 1040 88 1042zM132 1005 135 1025 128 1030zM30 1070 35 1082 30 1080z"/>
            <path opacity=".35" d="M1010 890 1036 885 1040 915z"/>
            <path d="M1326 550 1338 740 1333 735zM1330 820Q1320 900 1325 980L1310 1060 1303 1150 1337 1150 1335 1120 1372 1142Q1352 1100 1337 1090L1352 980 1352 900 1343 825 1346 920 1338 1000 1332 940zM1326 1170h6l-4 145h-6zM1310 1310 1318 1320 1314 1410 1308 1400zM1312 1402Q1328 1440 1314 1513H1298L1290 1470z"/>
            <path d="M0 1505 15 1500 20 1513H0z" opacity=".6"/>
          </g>
          <g fill="none" stroke="#5a1c0c" stroke-width="2" opacity=".7">
            <path vector-effect="non-scaling-stroke" d="M835 920Q838 980 810 1000 812 1150 815 1240 800 1330 812 1420M770 980 775 1200M725 900 732 1030M1330 900V1080M1350 900 1342 1030M580 990 606 1060M900 815 880 870M772 1280 777 1340M735 1165 747 1215M730 1440 742 1500"/>
          </g>
        </g></g>
        <g filter="url(#dot-soft)"><g transform="translate(1280 300) scale(.8163 .4464)">
          <g class="dots" stroke="#4f2f0b" stroke-width="5" opacity=".85">
            <path vector-effect="non-scaling-stroke" stroke-width="8" d="M1259 172h0M1282 176h0M1104 523h0M288 1043h0M265 1318h0"/>
            <path vector-effect="non-scaling-stroke" stroke-width="12" d="M707 1333h2"/>
            <path vector-effect="non-scaling-stroke" stroke-width="6" d="M782 125h0M1480 155h0M1348 205h0M1337 460h0M1181 455h0M1294 610h0M935 295h0M1059 375h0M1202 313h0M908 600h0M538 490h0M362 490h0M617 485h0M744 573h0M899 715h0M1150 773h0M880 1043h0M1068 1070h0M1220 1387h0M974 1437h0M949 1498h0M1181 1320h0M1053 1210h0"/>
            <path vector-effect="non-scaling-stroke" stroke-width="4" d="M1075 135h0M1072 190h0M1147 320h0M1262 345h0M1245 245h0M1185 575h0M1368 630h0M1395 545h0M1063 493h0M1006 550h0M1082 705h0M933 680h0M1062 772h0M1022 765h0M833 695h0M870 645h0M1123 1173h0M1242 1175h0M1257 1210h0M1192 1080h0M1414 1245h0M1465 1388h0M1428 1292h0M1382 1440h0M866 1365h0M834 1380h0M760 1370h0M750 1395h0M889 1480h0M755 1498h0M460 1330h0M532 1125h0M484 1105h0M448 985h0M402 1048h0M372 1063h0M360 960h0M253 1190h0M208 1175h0M234 1250h0M308 1270h0M95 1235h0M20 1225h0M60 1350h0M120 1440h0M66 1505h0M300 1470h0M165 855h0M90 800h0M300 590h0M140 470h0M220 380h0M320 240h0M90 260h0M180 180h0M500 150h0M600 250h0M1150 960h0M1165 1000h0M1180 1030h0M1203 1020h0M860 910h0M838 1160h0M890 960h0M1450 740h0M1490 1100h0M999 1223h0M555 1238h0M538 1335h0M583 1350h0M638 1160h0M637 1342h0M725 1400h0M391 1265h0M325 1167h0M334 1103h0M407 1187h0M384 1362h0M446 1470h0M58 1205h0M30 1465h0M150 1090h0M329 1040h0M390 908h0M222 665h0M219 925h0"/>
          </g>
        </g></g>
      </svg>
      <p class="story">consectetur adipiscing elit, sed do eiusmod tempor incididunt ut labLorem ipsum dolor sit amet, consectetur adipiscing elit, sed do eiusmod tempor incididunt ut labLorem ipsum dolor sit amet, consectetur adipiscing elit, sed do eiusmod tempor incididunt ut labLorem ipsum dolor sit amet, consectetur adipiscing elit, sed do eiusmod tempor incididunt ut labLorem ipsum dolor sit amet, consectetur adipiscing elit, sed do eiusmod tempor incididunt ut labLorem ipsum dolor sit amet, consectetur adipiscing elit, sed do eiusmod tempor incididunt ut labLorem ipsum dolor sit amet, consectetur adipiscing elit, sed do eiusmod tempor incididunt ut labLorem ipsum dolor sit amet, consectetur adipiscing elit, sed do eiusmod tempor incididunt ut labLorem ipsum dolor sit amet, consectetur adipiscing elit, sed do eiusmod tempor incididunt ut lab</p>
    </section>

    <section class="services">
      <h2>What we do</h2>
      <div class="cards">
        <article class="card">
          <h3>Sports</h3>
          <p>Lorem ipsum dolor sit amet, consectetur adipiscing elit, sed do eiusmod tempor incididunt ut labLorem ipsum dolor sit amet, consectetur adipiscing elit, sed do eiusmod tempor incididunt ut lab</p>
        </article>
        <article class="card">
          <h3>Fashion</h3>
          <p>Lorem ipsum dolor sit amet, consectetur adipiscing elit, sed do eiusmod tempor incididunt ut labLorem ips.</p>
        </article>
      </div>
    </section>
  </main>
  <div class="scrollbar"><div class="thumb"></div></div>
</div>
</body>
</html>
```
FILE: styles.css
```css
* { box-sizing: border-box; }
body {
  margin: 0;
  width: 2560px;
  height: 1600px;
  overflow: hidden;
  background: #000;
  color: #fff;
  font-family: Roboto, sans-serif;
}
svg { display: block; flex: none; }
.defs { position: absolute; width: 0; height: 0; }
.symbols { display: none; }
h2, h3, p { margin: 0; }

/* browser chrome */
.browser {
  height: 222px;
  background: #35363a;
  border-bottom: 2px solid #5d5c62;
  font-family: Inter, sans-serif;
}
.tabs {
  display: flex;
  align-items: flex-start;
  height: 84px;
  padding-left: 18px;
  background: #202124;
}
.tab {
  flex: none;
  display: flex;
  align-items: center;
  justify-content: center;
  width: 42px;
  height: 40px;
  margin-top: 31px;
  padding-bottom: 2px;
  border-right: 2px solid #5a5b5f;
}
.tab.wide { width: 44px; padding-left: 1px; }
.tab.last { width: 40px; border-right: 0; }
.tab svg { width: 30px; height: 32px; }
.tab.wide svg { width: 32px; }
.grey { color: #848b92; }
.white { color: #fff; }
.dim { color: #24292e; }
.globe-cut { fill: #202124; }
.fav-text {
  fill: #fff;
  font-family: "Open Sans", sans-serif;
  font-weight: 700;
  text-anchor: middle;
}
.fav-pink { fill: #ff61f6; font-weight: 600; }
.fav-dark { fill: #000; font-family: "Open Sans", sans-serif; font-weight: 500; text-anchor: middle; }
.fav-pma {
  fill: #2d2f66;
  stroke: #c9cbe6;
  stroke-width: .6;
  font-family: "Liberation Sans", sans-serif;
  font-weight: 700;
  font-style: italic;
  text-anchor: middle;
}
.tab-active {
  position: relative;
  flex: none;
  display: flex;
  align-items: center;
  justify-content: center;
  width: 64px;
  height: 68px;
  margin-top: 16px;
  border-radius: 16px 16px 0 0;
  background: #35363a;
}
.tab-active::before, .tab-active::after {
  content: "";
  position: absolute;
  bottom: 0;
  width: 16px;
  height: 16px;
}
.tab-active::before { left: -16px; background: radial-gradient(circle at 0 0, transparent 15.5px, #35363a 16px); }
.tab-active::after { right: -16px; background: radial-gradient(circle at 100% 0, transparent 15.5px, #35363a 16px); }
.tab-active svg { width: 18px; height: 18px; stroke: #f1f3f4; stroke-width: 2.6; }
.new-tab { width: 24px; height: 24px; margin: 38px 0 0 32px; stroke: #bdc1c6; stroke-width: 3.6; }
.tab-search { width: 28px; height: 28px; margin: 36px 30px 0 auto; fill: #bdc1c6; }
.tab-search path { fill: #202124; }

.toolbar {
  display: flex;
  align-items: center;
  height: 72px;
  padding-left: 31px;
}
.controls { display: flex; gap: 38px; width: 185px; fill: none; stroke: #f1f3f4; stroke-width: 3; }
.controls svg { width: 26px; height: 26px; }
.controls .disabled { stroke: #85868a; }
.controls .reload { width: 28px; height: 28px; margin-top: -1px; }
.controls .solid { fill: #f1f3f4; stroke: none; }
.omnibox {
  display: flex;
  align-items: center;
  width: 2064px;
  height: 56px;
  padding: 0 21px 0 28px;
  border-radius: 28px;
  background: #202124;
}
.lock { width: 16px; height: 21px; margin-right: 24px; fill: #9aa0a6; }
.lock path { fill: none; stroke: #9aa0a6; stroke-width: 2.4; }
.url { flex: 1; font-size: 28px; line-height: 34px; -webkit-text-stroke: .3px; }
.url span { color: #8f9194; letter-spacing: -.2px; -webkit-text-stroke: 0; }
.star { width: 30px; height: 30px; fill: none; stroke: #c2c3c5; stroke-width: 2.4; }
.actions { display: flex; align-items: center; padding-left: 30px; fill: #f1f3f4; }
.puzzle { width: 29px; height: 28px; }
.queue { width: 32px; height: 24px; margin-left: 33px; }
.queue path { fill: none; stroke: #f1f3f4; stroke-width: 3; }
.avatar { width: 44px; height: 44px; margin-left: 26px; border-radius: 50%; }
.kebab { width: 6px; height: 26px; margin-left: 39px; }

.bookmarks {
  display: grid;
  grid-template-columns: 137px 308px 300px 296px 302px 302px 302px 309px 35px 236px;
  align-items: center;
  height: 64px;
  padding-left: 31px;
  font-size: 24px;
  line-height: 32px;
  letter-spacing: -.18px;
}
.bm, .reading { display: flex; align-items: center; gap: 16px; white-space: nowrap; }
.bm svg { width: 32px; height: 32px; }
.apps { gap: 19px; }
.bm.apps svg { width: 26px; height: 27px; }
.globe-bm { gap: 18px; color: #f1f3f4; }
.bm.globe-bm svg { width: 28px; height: 28px; }
.bookmarks .globe-cut { fill: #35363a; }
.more svg { width: 13px; height: 12px; fill: none; stroke: #f1f3f4; stroke-width: 2.2; }
.reading { height: 32px; padding-left: 22px; border-left: 2px solid #5f6065; gap: 18px; letter-spacing: 0; }
.reading svg { width: 28px; height: 28px; }

/* site */
.viewport { display: flex; height: 1378px; }
.page { width: 2530px; overflow: hidden; }
.navbar {
  display: flex;
  align-items: center;
  justify-content: space-between;
  height: 128px;
  padding: 0 72px;
  background: #1a1a1a;
}
.logo { width: 80px; height: 80px; }
.logo-word { fill: #f2a6d8; stroke: #f2a6d8; stroke-width: .7; font: 700 22px "DejaVu Sans", sans-serif; }
.links { display: flex; gap: 48px; font-size: 32px; line-height: 38px; padding-bottom: 2px; color: #9b9b9b; }
.active { position: relative; color: #fff; font-weight: 700; }
.active::after {
  content: "";
  position: absolute;
  left: 0;
  bottom: -4px;
  width: 44px;
  height: 4px;
  background: #fff;
}

.hero {
  position: relative;
  height: 626px;
  padding: 0 446px;
  overflow: hidden;
}
.painting { position: absolute; inset: 0; width: 100%; height: 100%; }
.dots { fill: none; stroke-linecap: round; }
.story {
  position: relative;
  margin-top: -35px;
  font-size: 32px;
  font-weight: 300;
  line-height: 48px;
  letter-spacing: .98px;
  text-align: justify;
}

.services { height: 624px; padding: 172px 248px 0; background: #000; }
.services h2 { margin-bottom: 52px; font-size: 48px; font-weight: 400; line-height: 56px; }
.cards { display: grid; grid-template-columns: 1166px 820px; gap: 48px; }
.card { height: 328px; padding: 57px 72px 0; border: 2px solid #fff; }
.card h3 { margin-bottom: 40px; font-size: 40px; font-weight: 500; line-height: 48px; letter-spacing: .5px; }
.card p { font-size: 28px; line-height: 44px; letter-spacing: .18px; }

.scrollbar { width: 30px; padding: 192px 6px 0 8px; background: #fafafa; border-left: 1px solid #e6e6e6; border-right: 1px solid #ececec; }
.thumb { width: 15px; height: 598px; border-radius: 8px; background: #7f7f7f; }
```
